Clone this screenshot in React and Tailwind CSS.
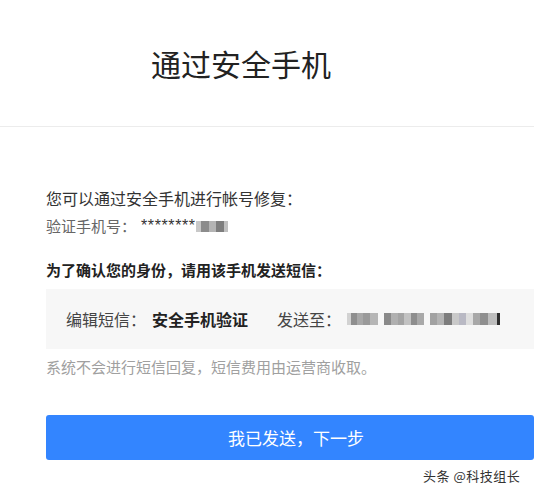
const font = { fontFamily: '"Noto Sans CJK SC", "Noto Sans", sans-serif' };

const Pixels = ({ cells, h = 'h-[12px]' }) => (
  <span className="inline-flex items-center align-middle">
    {cells.map((c, i) => (
      <span key={i} className={`inline-block ${h}`} style={{ width: c[0], backgroundColor: c[1] }} />
    ))}
  </span>
);

const phoneTail = [
  [5, '#c8c8c8'],
  [8, '#8c8c8c'],
  [7, '#b4b4b4'],
  [8, '#7e7e7e'],
  [4, '#c0c0c0'],
];

const group1 = [
  [4, '#d2d2d2'],
  [6, '#8f8f8f'],
  [6, '#a8a8a8'],
  [7, '#9a9a9a'],
  [8, '#b6b6b6'],
];
const group2 = [
  [7, '#8a8a8a'],
  [7, '#b0b0b0'],
  [6, '#a4a4a4'],
  [7, '#c2c2c2'],
  [6, '#8e8e8e'],
  [7, '#a9a9a9'],
];
const group3 = [
  [7, '#a2a2a2'],
  [7, '#b4b4b4'],
  [8, '#7d7d7d'],
  [7, '#c9c9c9'],
  [7, '#b9b9c4'],
  [7, '#dedede'],
  [7, '#a8a8a8'],
  [8, '#8f8f8f'],
  [9, '#bdbdbd'],
  [3, '#2e2e2e'],
];

export default function App() {
  return (
    <div className="relative w-[534px] h-[494px] bg-white overflow-hidden" style={font}>
      <div className="h-[127px] border-b border-[#ececec] pt-[43px]">
        <div className="w-[482px] text-center text-[30px] leading-[40px] text-[#222]">通过安全手机</div>
      </div>

      <div className="pl-[46px] pt-[57px]">
        <p className="text-[16px] leading-[28px] text-[#333]">您可以通过安全手机进行帐号修复：</p>
        <p className="flex items-center text-[15px] leading-[28px] text-[#666]">
          <span>验证手机号：</span>
          <span className="ml-[5px] text-[#333] text-[16px] tracking-[0.6px]" style={{ fontFamily: '"Liberation Sans", sans-serif' }}>********</span>
          <Pixels cells={phoneTail} h="h-[11px]" />
        </p>

        <p className="mt-[16px] text-[15px] leading-[28px] font-bold text-[#222]">为了确认您的身份，请用该手机发送短信：</p>

        <div className="mt-[5px] h-[60px] bg-[#f7f7f7] flex items-center pl-[20px] text-[16px]">
          <span className="text-[#444]">编辑短信：</span>
          <span className="ml-[6px] font-bold text-[#222]">安全手机验证</span>
          <span className="ml-[29px] text-[#444]">发送至：</span>
          <span className="ml-[6px] flex items-center gap-[6px]">
            <Pixels cells={group1} />
            <Pixels cells={group2} />
            <Pixels cells={group3} />
          </span>
        </div>

        <p className="mt-[6px] text-[15px] leading-[24px] text-[#a0a0a0]">系统不会进行短信回复，短信费用由运营商收取。</p>

        <button className="mt-[36px] w-full h-[45px] rounded-[3px] bg-[#3385ff] text-white text-[17px] flex items-center justify-center pl-[12px]">
          我已发送，下一步
        </button>
      </div>

      <div className="absolute left-[423px] top-[467px] text-[13px] leading-[18px] tracking-[0.5px] text-[#333]">头条 @科技组长</div>
    </div>
  );
}
